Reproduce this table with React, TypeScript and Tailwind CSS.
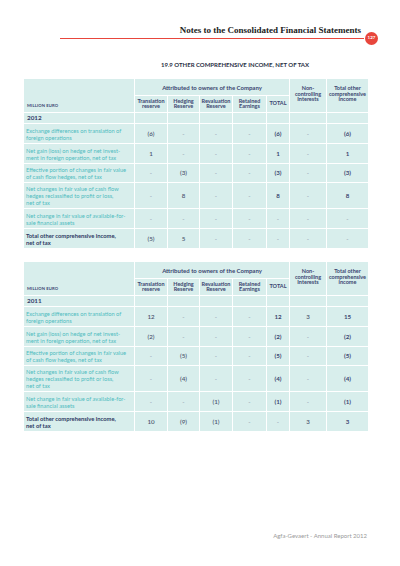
import React from "react";

const cols = "grid-cols-[110px_32px_31px_32px_33px_22px_36px_41px]";

type Row = { label: React.ReactNode; vals: string[]; h: string; total?: boolean };

const t1: Row[] = [
  { label: <>Exchange differences on translation of<br />foreign operations</>, vals: ["(6)", "-", "-", "-", "(6)", "-", "(6)"], h: "h-[19px]" },
  { label: <>Net gain (loss) on hedge of net invest-<br />ment in foreign operation, net of tax</>, vals: ["1", "-", "-", "-", "1", "-", "1"], h: "h-[19px]" },
  { label: <>Effective portion of changes in fair value<br />of cash flow hedges, net of tax</>, vals: ["-", "(3)", "-", "-", "(3)", "-", "(3)"], h: "h-[18px]" },
  { label: <>Net changes in fair value of cash flow<br />hedges reclassified to profit or loss,<br />net of tax</>, vals: ["-", "8", "-", "-", "8", "-", "8"], h: "h-[25px]" },
  { label: <>Net change in fair value of available-for-<br />sale financial assets</>, vals: ["-", "-", "-", "-", "-", "-", "-"], h: "h-[19px]" },
  { label: <>Total other comprehensive income,<br />net of tax</>, vals: ["(5)", "5", "-", "-", "-", "-", "-"], h: "h-[19px]", total: true },
];

const t2: Row[] = [
  { label: <>Exchange differences on translation of<br />foreign operations</>, vals: ["12", "-", "-", "-", "12", "3", "15"], h: "h-[19px]" },
  { label: <>Net gain (loss) on hedge of net invest-<br />ment in foreign operation, net of tax</>, vals: ["(2)", "-", "-", "-", "(2)", "-", "(2)"], h: "h-[19px]" },
  { label: <>Effective portion of changes in fair value<br />of cash flow hedges, net of tax</>, vals: ["-", "(5)", "-", "-", "(5)", "-", "(5)"], h: "h-[18px]" },
  { label: <>Net changes in fair value of cash flow<br />hedges reclassified to profit or loss,<br />net of tax</>, vals: ["-", "(4)", "-", "-", "(4)", "-", "(4)"], h: "h-[25px]" },
  { label: <>Net change in fair value of available-for-<br />sale financial assets</>, vals: ["-", "-", "(1)", "-", "(1)", "-", "(1)"], h: "h-[19px]" },
  { label: <>Total other comprehensive income,<br />net of tax</>, vals: ["10", "(9)", "(1)", "-", "-", "3", "3"], h: "h-[19px]", total: true },
];

const cell = "bg-[#d8eeec]";
const hdr = "text-[5.5px] leading-[5.5px] font-bold text-[#3b4670] text-center";

function Table({ year, rows }: { year: string; rows: Row[] }) {
  return (
    <div className={`grid ${cols} gap-px bg-white`}>
      <div className={`${cell} row-span-2 flex items-end pl-[3px] pb-[3px]`}>
        <span className="text-[4.2px] font-bold text-[#3b4670] tracking-[0.1px]">MILLION EURO</span>
      </div>
      <div className={`${cell} col-span-5 h-[16px] flex items-center justify-center text-[6px] font-bold text-[#3b4670]`}>
        Attributed to owners of the Company
      </div>
      <div className={`${cell} row-span-2 flex items-center justify-center ${hdr} pb-[2px]`}>
        Non-<br />controlling<br />Interests
      </div>
      <div className={`${cell} row-span-2 flex items-center justify-center ${hdr} pb-[2px]`}>
        Total other<br />comprehensive<br />income
      </div>
      <div className={`${cell} h-[16px] flex items-center justify-center ${hdr}`}>Translation<br />reserve</div>
      <div className={`${cell} flex items-center justify-center ${hdr}`}>Hedging<br />Reserve</div>
      <div className={`${cell} flex items-center justify-center ${hdr}`}>Revaluation<br />Reserve</div>
      <div className={`${cell} flex items-center justify-center ${hdr}`}>Retained<br />Earnings</div>
      <div className={`${cell} flex items-center justify-center ${hdr}`}>TOTAL</div>

      <div className={`${cell} h-[10px] flex items-center pl-[3px] text-[6.3px] font-bold text-[#34406a]`}>{year}</div>
      {[0, 1, 2, 3, 4, 5, 6].map((i) => (
        <div key={i} className={cell} />
      ))}

      {rows.map((r, ri) => (
        <React.Fragment key={ri}>
          <div
            className={`${cell} ${r.h} flex items-center pl-[2px] whitespace-nowrap leading-[7px] ${
              r.total ? "text-[5.8px] font-bold text-[#2f3a64]" : "text-[5.7px] text-[#4fbcc0]"
            }`}
          >
            <span>{r.label}</span>
          </div>
          {r.vals.map((v, vi) => (
            <div
              key={vi}
              className={`${cell} flex items-center justify-center text-[6.2px] ${
                v === "-"
                  ? "text-[#8a94a8]"
                  : vi === 4 || vi === 6
                  ? "font-bold text-[#3b4670]"
                  : "font-semibold text-[#4d5670]"
              }`}
            >
              {v}
            </div>
          ))}
        </React.Fragment>
      ))}
    </div>
  );
}

export default function App() {
  return (
    <div className="w-[400px] h-[566px] bg-white flex flex-col" style={{ fontFamily: "Lato, 'Open Sans', sans-serif" }}>
      <div
        className="mt-[24px] h-[12px] leading-[12px] text-right pr-[39px] text-[9px] font-bold text-[#222]"
        style={{ fontFamily: "'Liberation Serif', serif" }}
      >
        Notes to the Consolidated Financial Statements
      </div>
      <div className="-mt-[4px] flex items-center ml-[60px] mr-[22px]">
        <div className="flex-1 h-[1.5px] bg-[#e8463c]" />
        <div className="ml-[1px] w-[13px] h-[13px] rounded-full bg-[#e8463c] flex items-center justify-center text-[4.5px] font-bold text-white">
          127
        </div>
      </div>
      <div className="mt-[16px] h-[8px] leading-[8px] text-center pl-[70px] text-[6px] font-bold text-[#2a2f45]">
        19.9 OTHER COMPREHENSIVE INCOME, NET OF TAX
      </div>
      <div className="mt-[10px] ml-[24px]">
        <Table year="2012" rows={t1} />
      </div>
      <div className="mt-[14px] ml-[24px]">
        <Table year="2011" rows={t2} />
      </div>
      <div className="mt-[100px] text-right pr-[33px] text-[6px] text-[#9a9a9a]">Agfa-Gevaert - Annual Report 2012</div>
    </div>
  );
}
